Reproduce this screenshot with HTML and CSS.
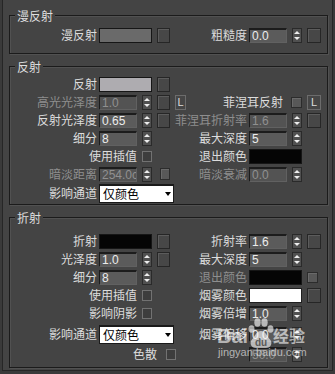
FILE: index.html
```html
<!DOCTYPE html>
<html lang="zh-CN">
<head>
<meta charset="utf-8">
<title>VRay 材质参数</title>
<link rel="stylesheet" href="styles.css">
</head>
<body>
<div class="frame">
  <section class="group g1">
    <div class="title">漫反射</div>
    <div class="row">
      <div class="lbl">漫反射</div>
      <div class="ctl"><span class="swatch sw-mid"></span><span class="mapbtn"></span></div>
      <div class="lbl">粗糙度</div>
      <div class="ctl"><span class="field">0.0</span><span class="spin"></span><span class="mapbtn rbtn"></span></div>
    </div>
  </section>

  <section class="group g2">
    <div class="title">反射</div>
    <div class="row">
      <div class="lbl">反射</div>
      <div class="ctl"><span class="swatch sw-light"></span><span class="mapbtn"></span></div>
    </div>
    <div class="row">
      <div class="lbl dim">高光光泽度</div>
      <div class="ctl"><span class="field dim">1.0</span><span class="spin"></span><span class="mapbtn"></span><span class="lbtn">L</span></div>
      <div class="wide-r"><span class="lbl-fr">菲涅耳反射</span><span class="chk chk-fill"></span><span class="lbtn lbtn-r">L</span></div>
    </div>
    <div class="row">
      <div class="lbl">反射光泽度</div>
      <div class="ctl"><span class="field">0.65</span><span class="spin"></span><span class="mapbtn"></span></div>
      <div class="lbl dim">菲涅耳折射率</div>
      <div class="ctl"><span class="field dim">1.6</span><span class="spin"></span><span class="mapbtn rbtn"></span></div>
    </div>
    <div class="row">
      <div class="lbl">细分</div>
      <div class="ctl"><span class="field">8</span><span class="spin"></span></div>
      <div class="lbl">最大深度</div>
      <div class="ctl"><span class="field">5</span><span class="spin"></span></div>
    </div>
    <div class="row">
      <div class="wide-l"><span class="lbl-c">使用插值</span><span class="chk"></span></div>
      <div class="lbl">退出颜色</div>
      <div class="ctl"><span class="swatch sw-black"></span></div>
    </div>
    <div class="row">
      <div class="lbl dim">暗淡距离</div>
      <div class="ctl"><span class="field dim">254.0cm</span><span class="spin"></span><span class="chk chk-fill chk-far"></span></div>
      <div class="lbl dim">暗淡衰减</div>
      <div class="ctl"><span class="field dim">0.0</span><span class="spin"></span></div>
    </div>
    <div class="row row-dd">
      <div class="lbl">影响通道</div>
      <div class="ctl"><span class="dropdown">仅颜色</span></div>
    </div>
  </section>

  <section class="group g3">
    <div class="title">折射</div>
    <div class="row">
      <div class="lbl">折射</div>
      <div class="ctl"><span class="swatch sw-black"></span><span class="mapbtn"></span></div>
      <div class="lbl">折射率</div>
      <div class="ctl"><span class="field">1.6</span><span class="spin"></span><span class="mapbtn rbtn"></span></div>
    </div>
    <div class="row">
      <div class="lbl">光泽度</div>
      <div class="ctl"><span class="field">1.0</span><span class="spin"></span><span class="mapbtn"></span></div>
      <div class="lbl">最大深度</div>
      <div class="ctl"><span class="field">5</span><span class="spin"></span></div>
    </div>
    <div class="row">
      <div class="lbl">细分</div>
      <div class="ctl"><span class="field">8</span><span class="spin"></span></div>
      <div class="lbl dim">退出颜色</div>
      <div class="ctl"><span class="swatch sw-black"></span><span class="chk chk-fill chk-r"></span></div>
    </div>
    <div class="row">
      <div class="wide-l"><span class="lbl-c">使用插值</span><span class="chk"></span></div>
      <div class="lbl">烟雾颜色</div>
      <div class="ctl"><span class="swatch sw-white"></span><span class="mapbtn rbtn"></span></div>
    </div>
    <div class="row">
      <div class="wide-l"><span class="lbl-c">影响阴影</span><span class="chk"></span></div>
      <div class="lbl">烟雾倍增</div>
      <div class="ctl"><span class="field">1.0</span><span class="spin"></span></div>
    </div>
    <div class="row row-dd">
      <div class="lbl">影响通道</div>
      <div class="ctl"><span class="dropdown">仅颜色</span></div>
      <div class="lbl">烟雾偏移</div>
      <div class="ctl"><span class="field">0.0</span><span class="spin"></span></div>
    </div>
    <div class="row row-last">
      <div class="wide-l"><span class="lbl-c lbl-c2">色散</span><span class="chk"></span></div>
      <div></div>
      <div class="ctl"><span class="field dim">50.0</span><span class="spin"></span></div>
    </div>
  </section>

  <div class="wm">
    <span class="wm-bai">Bai</span>
    <svg class="wm-paw" width="26" height="30" viewBox="0 0 26 30">
      <ellipse cx="3.5" cy="11" rx="3" ry="3.8" fill="rgba(255,255,255,0.62)"/>
      <ellipse cx="9.5" cy="4.5" rx="3.2" ry="4.2" fill="rgba(255,255,255,0.62)"/>
      <ellipse cx="16.5" cy="4.5" rx="3.2" ry="4.2" fill="rgba(255,255,255,0.62)"/>
      <ellipse cx="22.5" cy="11" rx="3" ry="3.8" fill="rgba(255,255,255,0.62)"/>
      <path d="M13 13 C8.5 13 7 18 4 21.5 C1 25 3 30 8 30 H18 C23 30 25 25 22 21.5 C19 18 17.5 13 13 13Z" fill="rgba(255,255,255,0.62)"/>
      <text x="13" y="28" text-anchor="middle" font-family="Liberation Sans, sans-serif" font-weight="bold" font-size="10" fill="#5a5a5a">du</text>
    </svg>
    <span class="wm-jy">经验</span>
    <span class="wm-url">jingyan.baidu.com</span>
  </div>
</div>
</body>
</html>
```

FILE: styles.css
```css
* {
  box-sizing: border-box;
}

body {
  margin: 0;
  background: #3a3a3a;
  font-family: "Noto Sans CJK SC", "Noto Sans", sans-serif;
  font-size: 12px;
  color: #dcdcdc;
}

.frame {
  position: relative;
  margin: 0 2px;
  background: #444444;
  border: 1px solid #262626;
  border-top: 0;
  padding: 15px 4px 2px 6px;
}

.group {
  border: 1px solid #1b1b1b;
  box-shadow: 1px 1px 0 #515151, inset 1px 1px 0 #515151;
  margin-bottom: 12px;
}

.title {
  width: max-content;
  height: 16px;
  line-height: 16px;
  margin: -8px 0 0 5px;
  padding: 0 2px;
  background: #444444;
  color: #dedede;
}

.g1 { padding-bottom: 9px; }
.g1 .row { margin-top: 2px; }
.g2 { padding-bottom: 1px; }
.g3 { padding-bottom: 4px; margin-bottom: 0; }
.g3 .title + .row { margin-top: 6px; }
.g3 .row-dd { margin-top: 2px; }
.g3 .row-last { margin-top: 1px; }

.row {
  display: grid;
  grid-template-columns: 87px 87px 59px 1fr;
  column-gap: 2px;
  height: 18px;
  align-items: center;
}

.row-dd { height: 20px; }

.lbl {
  display: flex;
  justify-content: flex-end;
  white-space: nowrap;
  line-height: 16px;
  min-width: 0;
}

.dim { color: #8e8e8e; }

.ctl {
  display: flex;
  align-items: center;
}

.wide-l {
  grid-column: 1 / 3;
  display: flex;
  align-items: center;
}

.lbl-c {
  width: 127px;
  text-align: right;
  line-height: 16px;
  white-space: nowrap;
}

.lbl-c2 { width: 147px; }
.wide-l .chk { margin-left: 5px; }
.lbl-c2 + .chk { margin-left: 9px; }

.wide-r {
  grid-column: 3 / 5;
  display: flex;
  align-items: center;
}

.lbl-fr {
  width: 95px;
  text-align: right;
  line-height: 16px;
  white-space: nowrap;
}

.wide-r .chk { margin-left: 8px; width: 11px; }

.field {
  width: 38px;
  height: 15px;
  background: #5b5b5b;
  border-top: 2px solid #1c1c1c;
  border-left: 1px solid #1c1c1c;
  border-right: 1px solid #616161;
  border-bottom: 1px solid #616161;
  padding-left: 2px;
  font-family: "Liberation Sans", Arial, sans-serif;
  font-size: 12px;
  line-height: 12px;
  color: #ececec;
  overflow: hidden;
  white-space: nowrap;
}

.field.dim {
  background: #535353;
  color: #909090;
}

.spin {
  margin-left: 5px;
  width: 10px;
  height: 15px;
  background: #505050;
  border: 1px solid #2a2a2a;
  display: flex;
  flex-direction: column;
  align-items: center;
  justify-content: space-between;
  padding: 2px 0;
}

.spin::before {
  content: "";
  border-left: 3px solid transparent;
  border-right: 3px solid transparent;
  border-bottom: 3px solid #eeeeee;
}

.spin::after {
  content: "";
  border-left: 3px solid transparent;
  border-right: 3px solid transparent;
  border-top: 3px solid #eeeeee;
}

.mapbtn {
  margin-left: 5px;
  width: 13px;
  height: 15px;
  border: 1px solid #262626;
  background: #474747;
  box-shadow: inset 1px 1px 0 #5c5c5c;
}

.rbtn { width: 14px; }

.swatch {
  width: 53px;
  height: 15px;
  border: 1px solid #161616;
}

.sw-mid { background: #6a6a6a; }
.sw-light { background: #aeacb0; }
.sw-black { background: #050505; }
.sw-white { background: #ffffff; border-color: #202020; }

.chk {
  width: 10px;
  height: 11px;
  border: 1px solid #727272;
  background: #3d3d3d;
}

.chk-fill {
  background: #585858;
  border-color: #2c2c2c;
  box-shadow: inset 1px 1px 0 #6a6a6a;
}

.chk-far { margin-left: 8px; height: 12px; }
.chk-r { margin-left: 5px; width: 11px; }

.lbtn {
  margin-left: 5px;
  width: 11px;
  height: 15px;
  border: 1px solid #6c6c6c;
  background: #464646;
  font-family: "Liberation Sans", Arial, sans-serif;
  font-size: 11px;
  line-height: 13px;
  text-align: center;
  color: #dddddd;
}

.lbtn-r { width: 14px; }

.dropdown {
  width: 75px;
  height: 19px;
  display: flex;
  align-items: center;
  background: #ffffff;
  border: 1px solid #1a1a1a;
  border-top-width: 2px;
  padding-left: 3px;
  color: #000000;
  line-height: 16px;
}

.dropdown::after {
  content: "";
  margin-left: auto;
  margin-right: 2px;
  border-left: 3.5px solid transparent;
  border-right: 3.5px solid transparent;
  border-top: 4px solid #000000;
}

.wm {
  position: absolute;
  left: 0;
  top: 0;
  width: 100%;
  height: 100%;
  pointer-events: none;
}

.wm-bai {
  position: absolute;
  left: 214px;
  top: 326px;
  font-family: "Liberation Sans", Arial, sans-serif;
  font-weight: bold;
  font-size: 20px;
  line-height: 20px;
  color: rgba(255, 255, 255, 0.6);
}

.wm-paw {
  position: absolute;
  left: 245px;
  top: 318px;
}

.wm-jy {
  position: absolute;
  left: 270px;
  top: 326px;
  font-size: 16px;
  line-height: 18px;
  font-weight: bold;
  color: rgba(255, 255, 255, 0.6);
}

.wm-url {
  position: absolute;
  left: 215px;
  top: 346px;
  font-family: "Liberation Sans", Arial, sans-serif;
  font-size: 11px;
  line-height: 13px;
  color: rgba(255, 255, 255, 0.6);
}
```
